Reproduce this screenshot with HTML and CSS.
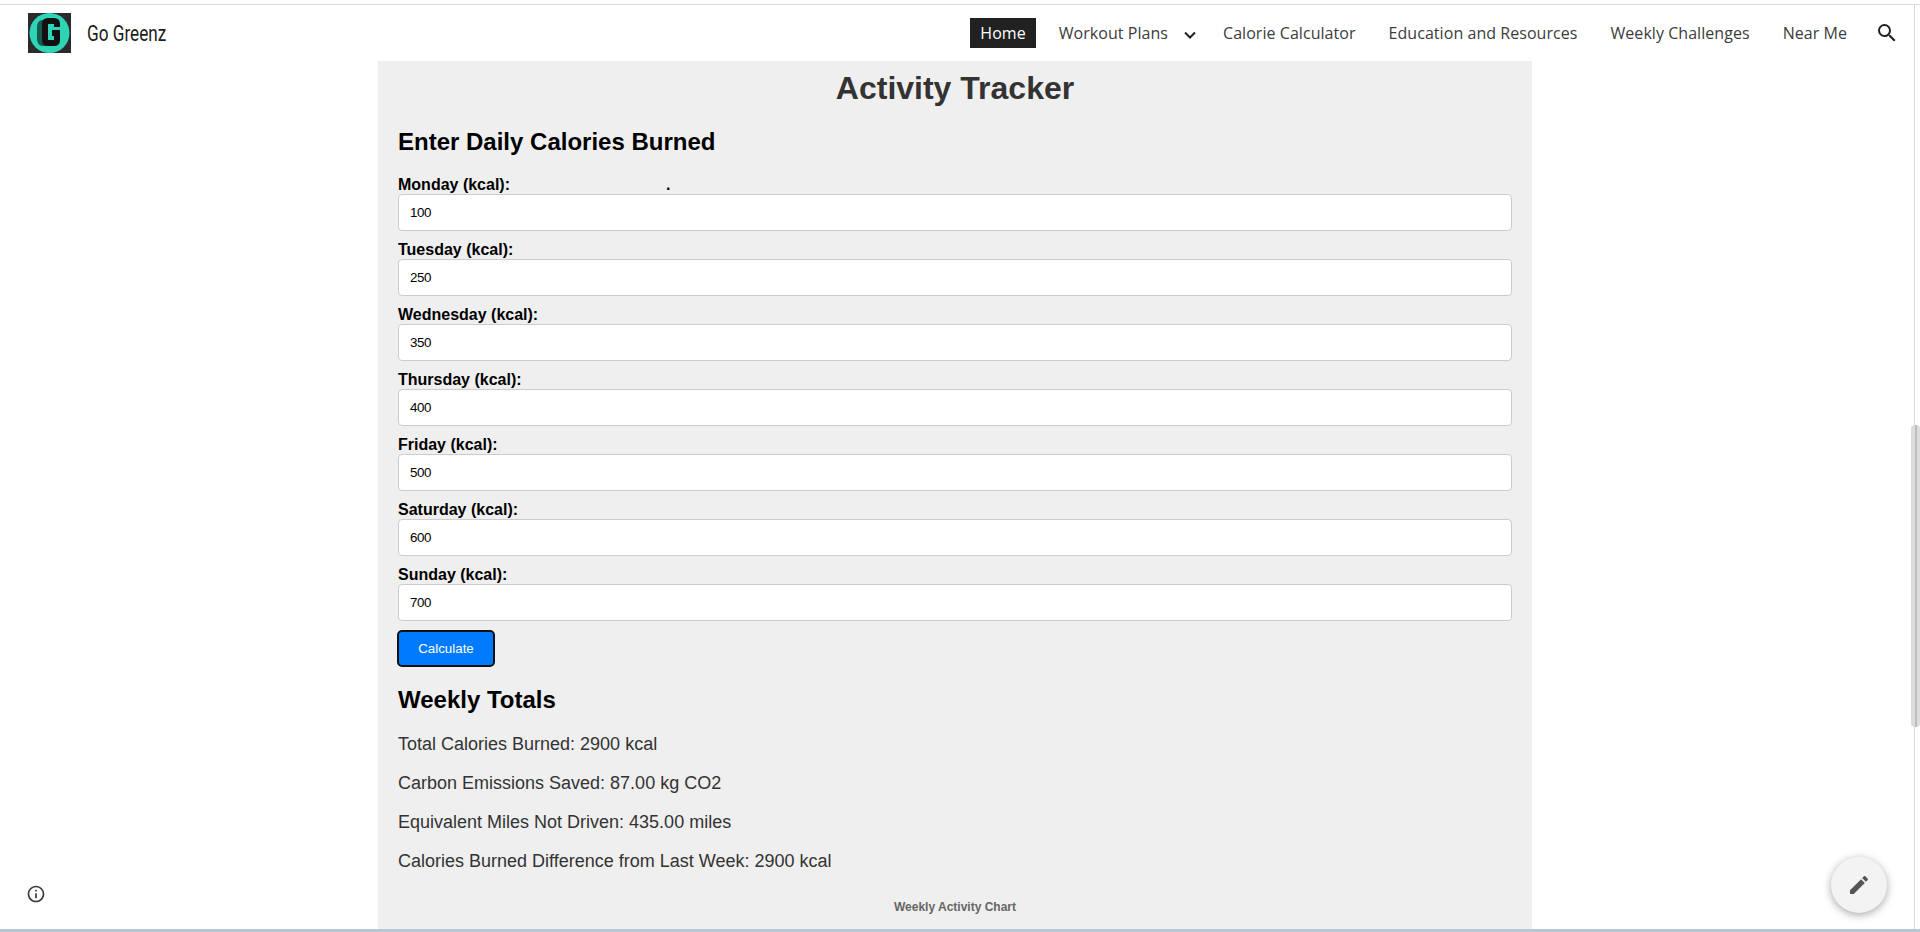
FILE: index.html
```html
<!DOCTYPE html>
<html lang="en">
<head>
    <meta charset="UTF-8">
    <meta name="viewport" content="width=device-width, initial-scale=1.0">
    <title>Go Greenz - Activity Tracker</title>
    <link rel="stylesheet" href="styles.css">
</head>
<body>
    <header class="topbar">
        <a class="brand" href="#">
            <svg class="brand-logo" width="43" height="40" viewBox="0 0 43 40">
                <rect width="43" height="40" fill="#2b2b2b"></rect>
                <circle cx="21.5" cy="20" r="20" fill="#2fd3b5"></circle>
                <path d="M15 7C11 7 9 10 9 14V25C9 30 11 33 15 33H19V7z" fill="#17594f"></path>
                <path d="M29 14V11Q29 8 26 8H20Q17 8 17 11V27Q17 30 20 30H26Q29 30 29 27V20H24" fill="none" stroke="#111" stroke-width="6"></path>
            </svg>
            <span class="brand-name">Go Greenz</span>
        </a>
        <nav class="nav">
            <a class="nav-link nav-active" href="#">Home</a>
            <a class="nav-link nav-plans" href="#">Workout Plans</a>
            <svg class="nav-chevron" width="12" height="8" viewBox="0 0 12 8">
                <polyline points="1 1.5 6 6.5 11 1.5"></polyline>
            </svg>
            <a class="nav-link" href="#">Calorie Calculator</a>
            <a class="nav-link" href="#">Education and Resources</a>
            <a class="nav-link" href="#">Weekly Challenges</a>
            <a class="nav-link" href="#">Near Me</a>
            <svg class="nav-search" width="24" height="24" viewBox="0 0 24 24">
                <path d="M15.5 14h-.79l-.28-.27A6.47 6.47 0 0 0 16 9.5 6.5 6.5 0 1 0 9.5 16c1.61 0 3.09-.59 4.23-1.57l.27.28v.79l5 4.99L20.49 19l-4.99-5zm-6 0C7.01 14 5 11.99 5 9.5S7.01 5 9.5 5 14 7.01 14 9.5 11.99 14 9.5 14z"></path>
            </svg>
        </nav>
    </header>

    <main class="tracker">
        <h1 class="tracker-title">Activity Tracker</h1>
        <h2 class="section-title">Enter Daily Calories Burned</h2>

        <label class="day-label" for="monday">Monday (kcal):<span class="stray-dot">.</span></label>
        <input class="day-input" type="text" id="monday" value="100">
        <label class="day-label" for="tuesday">Tuesday (kcal):</label>
        <input class="day-input" type="text" id="tuesday" value="250">
        <label class="day-label" for="wednesday">Wednesday (kcal):</label>
        <input class="day-input" type="text" id="wednesday" value="350">
        <label class="day-label" for="thursday">Thursday (kcal):</label>
        <input class="day-input" type="text" id="thursday" value="400">
        <label class="day-label" for="friday">Friday (kcal):</label>
        <input class="day-input" type="text" id="friday" value="500">
        <label class="day-label" for="saturday">Saturday (kcal):</label>
        <input class="day-input" type="text" id="saturday" value="600">
        <label class="day-label" for="sunday">Sunday (kcal):</label>
        <input class="day-input" type="text" id="sunday" value="700">

        <button class="calc-button">Calculate</button>

        <h2 class="section-title totals-title">Weekly Totals</h2>
        <p class="total-line">Total Calories Burned: 2900 kcal</p>
        <p class="total-line">Carbon Emissions Saved: 87.00 kg CO2</p>
        <p class="total-line">Equivalent Miles Not Driven: 435.00 miles</p>
        <p class="total-line">Calories Burned Difference from Last Week: 2900 kcal</p>

        <p class="chart-title">Weekly Activity Chart</p>
    </main>

    <svg class="info-icon" width="20" height="20" viewBox="0 0 24 24">
        <path d="M11 7h2v2h-2zm0 4h2v6h-2zm1-9C6.48 2 2 6.48 2 12s4.48 10 10 10 10-4.48 10-10S17.52 2 12 2zm0 18c-4.41 0-8-3.59-8-8s3.59-8 8-8 8 3.59 8 8-3.59 8-8 8z"></path>
    </svg>

    <button class="edit-fab">
        <svg width="24" height="24" viewBox="0 0 24 24">
            <path d="M3 17.25V21h3.75L17.81 9.94l-3.75-3.75L3 17.25zM20.71 7.04a1 1 0 0 0 0-1.41l-2.34-2.34a1 1 0 0 0-1.41 0l-1.83 1.83 3.75 3.75 1.83-1.83z"></path>
        </svg>
    </button>

    <div class="scroll-track"><div class="scroll-thumb"></div></div>
</body>
</html>
```

FILE: styles.css
```css
html, body {
    margin: 0;
    height: 932px;
    overflow: hidden;
}
body {
    box-sizing: border-box;
    border-top: 4px solid #fff;
    border-bottom: 3px solid #b9c6d6;
    background: #fff;
    display: flex;
    flex-direction: column;
    font-family: "Liberation Sans", Arial, sans-serif;
    position: relative;
}
.topbar {
    height: 57px;
    flex-shrink: 0;
    border-top: 1px solid #dcdcdc;
    box-sizing: border-box;
    display: flex;
    align-items: center;
    justify-content: space-between;
    padding: 0 21px 0 28px;
}
.brand {
    display: flex;
    align-items: center;
    gap: 16px;
    text-decoration: none;
}
.brand-logo {
    display: block;
}
.brand-name {
    font-family: "Roboto", "Liberation Sans", sans-serif;
    font-size: 22px;
    color: #1c1c1c;
    transform: scaleX(0.78);
    transform-origin: left center;
}
.nav {
    display: flex;
    align-items: center;
}
.nav-link {
    font-family: "Open Sans", sans-serif;
    font-size: 16px;
    letter-spacing: 0.05px;
    color: #3c3c3c;
    text-decoration: none;
    margin-left: 33px;
}
.nav-active {
    background: #212121;
    color: #fff;
    padding: 6px 10px;
    height: 18px;
    line-height: 18px;
}
.nav-plans {
    margin-left: 23px;
}
.nav-chevron {
    margin: 3px -6px 0 16px;
    fill: none;
    stroke: #212121;
    stroke-width: 2;
}
.nav-search {
    margin-left: 28px;
    fill: #212121;
}
.tracker {
    width: 1154px;
    box-sizing: border-box;
    margin-left: 378px;
    padding: 0 20px;
    background: #efefef;
    flex: 1;
    overflow: hidden;
}
.tracker-title {
    margin: 9px 0 0;
    font-size: 32px;
    line-height: 37px;
    font-weight: 700;
    color: #333;
    text-align: center;
}
.section-title {
    margin: 21px 0 0;
    font-size: 24px;
    line-height: 28px;
    font-weight: 700;
    color: #000;
}
.day-label {
    display: block;
    height: 20px;
    font-size: 16px;
    line-height: 22px;
    font-weight: 700;
    color: #000;
}
.section-title + .day-label {
    margin-top: 18px;
}
.stray-dot {
    margin-left: 156px;
}
.day-input {
    display: block;
    box-sizing: border-box;
    width: 100%;
    height: 37px;
    margin: 0 0 8px;
    padding: 0 11px;
    border: 1px solid #ccc;
    border-radius: 4px;
    background: #fff;
    font-family: "Liberation Sans", Arial, sans-serif;
    font-size: 13.33px;
    letter-spacing: -0.4px;
    color: #000;
}
.calc-button {
    display: block;
    box-sizing: border-box;
    width: 98px;
    height: 37px;
    margin: 9px 0 0 -1px;
    border: 2px solid #111;
    border-radius: 5px;
    background: #007bff;
    color: #fff;
    font-family: "Liberation Sans", Arial, sans-serif;
    font-size: 13.33px;
}
.totals-title {
    margin-top: 19px;
}
.total-line {
    margin: 16px 0 0;
    font-size: 18px;
    line-height: 23px;
    color: #333;
}
.totals-title + .total-line {
    margin-top: 19px;
}
.chart-title {
    margin: 27px 0 0;
    font-size: 12px;
    font-weight: 700;
    color: #666;
    text-align: center;
}
.info-icon {
    position: absolute;
    left: 26px;
    top: 880px;
    fill: #3c3c3c;
}
.edit-fab {
    position: absolute;
    left: 1831px;
    top: 853px;
    width: 56px;
    height: 56px;
    border: none;
    border-radius: 50%;
    background: #f3f3f3;
    box-shadow: 0 2px 8px rgba(0,0,0,0.35);
    display: flex;
    align-items: center;
    justify-content: center;
    fill: #555;
}
.scroll-track {
    position: absolute;
    right: 0;
    top: 0;
    bottom: 0;
    width: 5px;
    border-left: 1px solid #d8d8d8;
}
.scroll-thumb {
    position: absolute;
    right: 0;
    top: 421px;
    width: 9px;
    height: 302px;
    border-radius: 4px;
    background: linear-gradient(90deg, #dcdcdc 0 4px, #bdbdbd 4px 6px, #dcdcdc 6px);
}
```
